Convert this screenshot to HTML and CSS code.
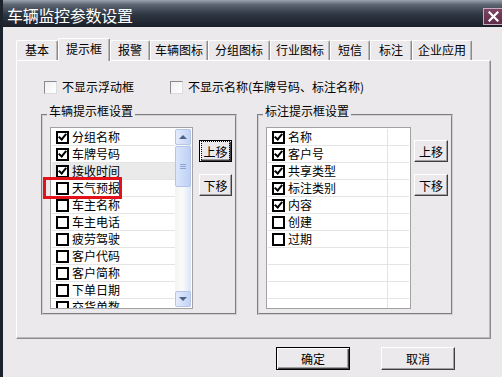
FILE: index.html
```html
<!DOCTYPE html>
<html lang="zh-CN">
<head>
  <meta charset="UTF-8" />
  <title>车辆监控参数设置</title>
  <link rel="stylesheet" href="styles.css">
</head>
<body>
  <div class="window">
    <div class="titlebar">
      <span class="title">车辆监控参数设置</span>
      <span class="close">
        <svg width="11" height="11" viewBox="0 0 11 11"><path d="M1.5 1.5L9.5 9.5M9.5 1.5L1.5 9.5" stroke="#fff" stroke-width="2.2" stroke-linecap="square"/></svg>
      </span>
    </div>

    <div class="tabs">
      <div class="tab">基本</div>
      <div class="tab active">提示框</div>
      <div class="tab">报警</div>
      <div class="tab">车辆图标</div>
      <div class="tab">分组图标</div>
      <div class="tab">行业图标</div>
      <div class="tab">短信</div>
      <div class="tab">标注</div>
      <div class="tab">企业应用</div>
    </div>

    <div class="panel">
      <div class="options">
        <label class="opt"><span class="flatbox"></span>不显示浮动框</label>
        <label class="opt"><span class="flatbox"></span>不显示名称(车牌号码、标注名称)</label>
      </div>

      <div class="groups">
        <fieldset class="group">
          <legend>车辆提示框设置</legend>
          <div class="group-body">
            <div class="listbox with-scroll">
              <div class="rows">
                <div class="row"><div class="cell"><span class="chk on"></span>分组名称</div></div>
                <div class="row"><div class="cell"><span class="chk on"></span>车牌号码</div></div>
                <div class="row dim"><div class="cell"><span class="chk on"></span>接收时间</div></div>
                <div class="row"><div class="cell"><span class="chk"></span>天气预报</div></div>
                <div class="row"><div class="cell"><span class="chk"></span>车主名称</div></div>
                <div class="row"><div class="cell"><span class="chk"></span>车主电话</div></div>
                <div class="row"><div class="cell"><span class="chk"></span>疲劳驾驶</div></div>
                <div class="row"><div class="cell"><span class="chk"></span>客户代码</div></div>
                <div class="row"><div class="cell"><span class="chk"></span>客户简称</div></div>
                <div class="row"><div class="cell"><span class="chk"></span>下单日期</div></div>
                <div class="row"><div class="cell"><span class="chk"></span>交货单数</div></div>
              </div>
              <div class="scrollbar">
                <div class="sb-btn up"></div>
                <div class="track">
                  <div class="thumb"><i></i><i></i><i></i></div>
                </div>
                <div class="sb-btn down"></div>
              </div>
            </div>
            <div class="side">
              <button class="btn focus"><span>上移</span></button>
              <button class="btn">下移</button>
            </div>
          </div>
        </fieldset>

        <fieldset class="group">
          <legend>标注提示框设置</legend>
          <div class="group-body">
            <div class="listbox wide">
              <div class="rows">
                <div class="row"><div class="cell"><span class="chk on"></span>名称</div></div>
                <div class="row"><div class="cell"><span class="chk on"></span>客户号</div></div>
                <div class="row"><div class="cell"><span class="chk on"></span>共享类型</div></div>
                <div class="row"><div class="cell"><span class="chk on"></span>标注类别</div></div>
                <div class="row"><div class="cell"><span class="chk on"></span>内容</div></div>
                <div class="row"><div class="cell"><span class="chk"></span>创建</div></div>
                <div class="row"><div class="cell"><span class="chk"></span>过期</div></div>
                <div class="row"><div class="cell"></div></div>
                <div class="row"><div class="cell"></div></div>
                <div class="row"><div class="cell"></div></div>
                <div class="row"><div class="cell"></div></div>
              </div>
            </div>
            <div class="side near">
              <button class="btn">上移</button>
              <button class="btn">下移</button>
            </div>
          </div>
        </fieldset>
      </div>
    </div>

    <div class="footer">
      <button class="btn big default">确定</button>
      <button class="btn big">取消</button>
    </div>

    <div class="mark"></div>
  </div>
</body>
</html>
```

FILE: styles.css
```css
body {
  margin: 0;
  background: #ece9ec;
  font-family: "Noto Sans CJK SC", "Liberation Sans", sans-serif;
  font-size: 12px;
  color: #000;
}
.window {
  position: relative;
  width: 502px;
  height: 377px;
  box-sizing: border-box;
  border-left: 3px solid #1d232d;
  overflow: hidden;
}
.titlebar {
  display: flex;
  height: 27px;
  margin-left: -3px;
  padding-left: 7px;
  background: linear-gradient(#9aa3ae 0, #5a6370 18%, #2d3541 55%, #1a1f28 100%);
}
.title {
  color: #fff;
  font-size: 16px;
  line-height: 26px;
  padding-top: 2px;
  letter-spacing: -0.3px;
}
.close {
  margin-left: auto;
  margin-top: 8px;
  width: 19px;
  height: 17px;
  box-sizing: border-box;
  border: 1px solid #c9aabb;
  border-right: 0;
  background: linear-gradient(#7d4565, #5e2c48);
  display: flex;
  align-items: center;
  justify-content: center;
}

/* tabs */
.tabs {
  position: relative;
  z-index: 1;
  display: flex;
  align-items: flex-end;
  height: 20px;
  margin: 13px 0 0 13px;
}
.tab {
  height: 20px;
  box-sizing: border-box;
  border: 1px solid;
  border-color: #fff #8a8a8a transparent #fff;
  border-bottom: 0;
  border-radius: 2px 2px 0 0;
  box-shadow: inset -1px 0 0 #b8b8b8;
  text-align: center;
  line-height: 18px;
  background: #ece9ec;
}
.tab:nth-child(1) { width: 42px; }
.tab:nth-child(2) { width: 52px; }
.tab:nth-child(3) { width: 40px; }
.tab:nth-child(4) { width: 58px; }
.tab:nth-child(5) { width: 62px; }
.tab:nth-child(6) { width: 60px; }
.tab:nth-child(7) { width: 40px; }
.tab:nth-child(8) { width: 42px; }
.tab:nth-child(9) { width: 60px; }
.tab.active {
  height: 23px;
  margin-bottom: -1px;
  line-height: 19px;
}

.panel {
  margin-left: 13px;
  width: 475px;
  height: 279px;
  box-sizing: border-box;
  border: 1px solid;
  border-color: #fff #8c8c8c #8c8c8c #fff;
  box-shadow: inset -1px -1px 0 #b9b9b9;
}

.options {
  display: flex;
  align-items: center;
  gap: 36px;
  height: 16px;
  margin: 18px 0 0 27px;
}
.opt {
  display: flex;
  align-items: center;
  gap: 5px;
  line-height: 16px;
}
.flatbox {
  width: 13px;
  height: 13px;
  box-sizing: border-box;
  border: 1px solid;
  border-color: #8a8a8a #dcdcdc #dcdcdc #8a8a8a;
  background: linear-gradient(135deg, #f0f0f0, #fff);
}

/* group boxes */
.groups {
  display: flex;
  gap: 20px;
  margin: 8px 0 0 24px;
}
.group {
  margin: 0;
  min-width: 0;
  width: 196px;
  box-sizing: border-box;
  padding: 0 0 4px 7px;
  border: 2px groove #d2d0d2;
}
.group legend {
  margin-left: -3px;
  padding: 0 2px 8px;
  line-height: 16px;
}
.group-body {
  display: flex;
  align-items: flex-start;
}

.listbox {
  display: flex;
  width: 143px;
  height: 182px;
  box-sizing: border-box;
  border: 1px solid #a2a2a2;
  padding: 1px 1px 1px 1px;
  background: #fff;
  overflow: hidden;
}
.listbox.wide {
  width: 145px;
}
.rows {
  flex: 1;
  min-width: 0;
}
.row {
  display: flex;
  height: 17px;
  box-sizing: border-box;
  border-bottom: 1px solid #e4e4e4;
}
.row.dim {
  background: #eaeaea;
}
.cell {
  display: flex;
  align-items: center;
  gap: 3px;
  width: 120px;
  box-sizing: border-box;
  padding-left: 4px;
  border-right: 1px solid #e4e4e4;
  line-height: 16px;
  white-space: nowrap;
}
.with-scroll .cell {
  flex: 1;
  border-right: 0;
}
.chk {
  position: relative;
  flex: none;
  width: 13px;
  height: 13px;
  box-sizing: border-box;
  border: 2px solid #000;
  background: #fff;
}
.chk.on::after {
  content: "";
  position: absolute;
  left: 2px;
  top: -1px;
  width: 3px;
  height: 6px;
  border: solid #000;
  border-width: 0 2px 2px 0;
  transform: rotate(40deg);
}

/* scrollbar */
.scrollbar {
  display: flex;
  flex-direction: column;
  width: 16px;
  background: linear-gradient(to right, #f4f4f0, #fbfbfb 45%, #dbe5f8);
}
.sb-btn {
  height: 16px;
  box-sizing: border-box;
  border: 1px solid #b4c5e9;
  border-radius: 2px;
  background: linear-gradient(to right, #e4ecfc, #c2d3f5);
  display: flex;
  align-items: center;
  justify-content: center;
}
.sb-btn.up::before,
.sb-btn.down::before {
  content: "";
  border-left: 4px solid transparent;
  border-right: 4px solid transparent;
}
.sb-btn.up::before { border-bottom: 4px solid #4d6185; }
.sb-btn.down::before { border-top: 4px solid #4d6185; }
.track {
  flex: 1;
}
.thumb {
  height: 41px;
  margin-top: 1px;
  box-sizing: border-box;
  border: 1px solid #b4c5e9;
  border-radius: 2px;
  background: linear-gradient(to right, #dbe6fc, #bdd0f5);
  display: flex;
  flex-direction: column;
  align-items: center;
  justify-content: center;
  gap: 1px;
}
.thumb i {
  width: 6px;
  height: 1px;
  background: #8ea4d2;
}

/* buttons */
.side {
  display: flex;
  flex-direction: column;
  gap: 12px;
  margin: 13px 0 0 6px;
}
.side.near {
  margin-left: 3px;
}
.btn {
  width: 33px;
  height: 22px;
  padding: 0;
  font-family: inherit;
  font-size: 12px;
  color: #000;
  background: #ece9ec;
  border: 1px solid;
  border-color: #fff #404040 #404040 #fff;
  box-shadow: inset -1px -1px 0 #a0a0a0;
}
.side.near .btn {
  width: 34px;
}
.btn.focus,
.btn.default {
  border-color: #000;
  box-shadow: inset 1px 1px 0 #fff, inset -1px -1px 0 #404040, inset -2px -2px 0 #a0a0a0;
}
.btn.focus span {
  outline: 1px dotted #000;
  outline-offset: 1px;
}

.footer {
  display: flex;
  gap: 31px;
  margin: 8px 0 0 273px;
}
.btn.big {
  width: 74px;
  height: 23px;
}

/* red note around one row */
.mark {
  position: absolute;
  left: 40px;
  top: 177px;
  width: 79px;
  height: 22px;
  box-sizing: border-box;
  border: 3px solid #e3121a;
}
```
